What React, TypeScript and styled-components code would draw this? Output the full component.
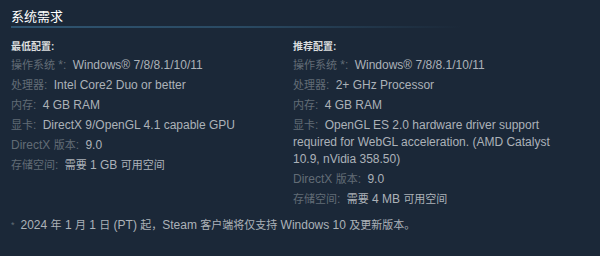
import styled, { createGlobalStyle } from "styled-components";

const GlobalStyle = createGlobalStyle`
  html, body {
    margin: 0;
    padding: 0;
    background: #1b2838;
  }
  body {
    font-family: "Liberation Sans", Arial, "Noto Sans CJK SC", sans-serif;
  }
`;

type Req = { label: string; value: string };

const minimum: Req[] = [
  { label: "操作系统 *:", value: "Windows® 7/8/8.1/10/11" },
  { label: "处理器:", value: "Intel Core2 Duo or better" },
  { label: "内存:", value: "4 GB RAM" },
  { label: "显卡:", value: "DirectX 9/OpenGL 4.1 capable GPU" },
  { label: "DirectX 版本:", value: "9.0" },
  { label: "存储空间:", value: "需要 1 GB 可用空间" },
];

const recommended: Req[] = [
  { label: "操作系统 *:", value: "Windows® 7/8/8.1/10/11" },
  { label: "处理器:", value: "2+ GHz Processor" },
  { label: "内存:", value: "4 GB RAM" },
  {
    label: "显卡:",
    value:
      "OpenGL ES 2.0 hardware driver support required for WebGL acceleration. (AMD Catalyst 10.9, nVidia 358.50)",
  },
  { label: "DirectX 版本:", value: "9.0" },
  { label: "存储空间:", value: "需要 4 MB 可用空间" },
];

// CJK glyphs render a bit smaller than the latin text in the original
const CJK_RUN = /([\u3000-\u303f\u3400-\u9fff\uff00-\uffef]+)/;

function Mixed({ text }: { text: string }) {
  return (
    <>
      {text.split(CJK_RUN).map((part, i) =>
        i % 2 === 1 ? <StyledCjk key={i}>{part}</StyledCjk> : part
      )}
    </>
  );
}

function ReqColumn({ title, items }: { title: string; items: Req[] }) {
  return (
    <StyledColumn>
      <StyledColumnTitle>{title}</StyledColumnTitle>
      <ul>
        {items.map((item) => (
          <StyledReqItem key={item.label}>
            <StyledLabel>
              <Mixed text={item.label} />
            </StyledLabel>{" "}
            <Mixed text={item.value} />
          </StyledReqItem>
        ))}
      </ul>
    </StyledColumn>
  );
}

export default function App() {
  return (
    <>
      <GlobalStyle />
      <StyledSection>
        <StyledHeading>系统需求</StyledHeading>
        <StyledColumns>
          <ReqColumn title="最低配置:" items={minimum} />
          <ReqColumn title="推荐配置:" items={recommended} />
        </StyledColumns>
        <StyledNote>
          <StyledStar>*</StyledStar>
          <Mixed text="2024 年 1 月 1 日 (PT) 起，Steam 客户端将仅支持 Windows 10 及更新版本。" />
        </StyledNote>
      </StyledSection>
    </>
  );
}

const StyledSection = styled.section`
  width: 578px;
  height: 256px;
  padding: 0 11px;
  box-sizing: content-box;
  background: #1b2838;
`;

const StyledHeading = styled.h2`
  margin: 0;
  padding: 10px 0 5px;
  font-size: 13px;
  font-weight: normal;
  line-height: 13px;
  color: #ffffff;
  background-image: linear-gradient(
    to right,
    #2f5470 0%,
    #2a4a63 40%,
    rgba(42, 71, 94, 0) 78%
  );
  background-repeat: no-repeat;
  background-position: bottom left;
  background-size: 100% 2px;
`;

const StyledColumns = styled.div`
  display: grid;
  grid-template-columns: 282px 258px;
  padding-top: 12px;
`;

const StyledColumn = styled.div`
  > ul {
    margin: 0;
    padding: 0;
    list-style: none;
  }
`;

const StyledColumnTitle = styled.div`
  font-size: 10px;
  font-weight: bold;
  line-height: 14px;
  color: #dcdedf;
  margin-bottom: 3px;
`;

const StyledReqItem = styled.li`
  font-size: 12px;
  line-height: 17px;
  margin-bottom: 3px;
  color: #acb2b8;
`;

const StyledLabel = styled.span`
  display: inline-block;
  margin-right: 3px;
  color: #626c76;
`;

const StyledCjk = styled.span`
  font-size: 11px;
`;

const StyledNote = styled.div`
  margin-top: 6px;
  font-size: 12px;
  line-height: 17px;
  color: #acb2b8;
`;

const StyledStar = styled.span`
  display: inline-block;
  margin-right: 6px;
  font-size: 9px;
  vertical-align: top;
  color: #626c76;
`;
